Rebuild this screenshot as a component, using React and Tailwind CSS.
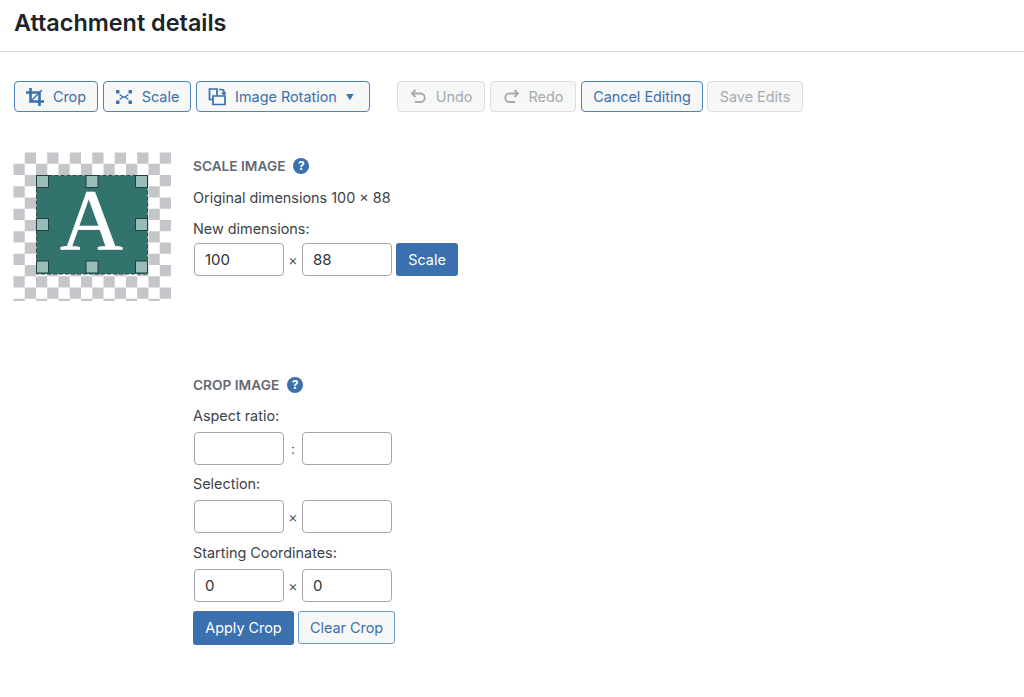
import React from 'react';

const font = { fontFamily: 'Inter, "Noto Sans", sans-serif' };

const CropIcon = () => (
    <svg width="18" height="18" viewBox="0 0 18 18" fill="none" stroke="currentColor" strokeWidth="2.6">
        <path d="M0 4.500h13.500V18" />
        <path d="M4.500 0v13.500H18" />
        <path d="M4.500 13.500L16 2" strokeWidth="1.5" />
    </svg>
);

const ScaleIcon = () => (
    <svg width="18" height="18" viewBox="0 0 18 18" fill="currentColor">
        <rect x="1" y="2" width="3.5" height="3.5" rx="0.8" />
        <rect x="13.5" y="2" width="3.5" height="3.5" rx="0.8" />
        <rect x="1" y="12.5" width="3.5" height="3.5" rx="0.8" />
        <rect x="13.5" y="12.5" width="3.5" height="3.5" rx="0.8" />
        <path d="M5 6l3 2.200h2L13 6l.8.9L11 9l2.800 2.100-.8.9-3-2.200H8L5 12l-.8-.9L7 9 4.200 6.900z" />
    </svg>
);

const RotationIcon = () => (
    <svg width="18" height="20" viewBox="0 0 18 20" fill="none" stroke="currentColor" strokeWidth="1.7">
        <path d="M5 12.500H1.500V2h7.500v7" />
        <path d="M5 9h12v8.500H5z" />
        <path d="M11 2.500h2.500a2.500 2.500 0 012.500 2.500v2" />
        <path d="M13.800 5.500L16 7.800l2-2.300" strokeWidth="1.400" />
    </svg>
);

const UndoIcon = () => (
    <svg width="17" height="16" viewBox="0 0 17 16" fill="none" stroke="currentColor" strokeWidth="1.8">
        <path d="M2 4.500h8.500a4.200 4.200 0 010 8.500H5" />
        <path d="M5.500 1L2 4.500 5.500 8" />
    </svg>
);

const RedoIcon = () => (
    <svg width="17" height="16" viewBox="0 0 17 16" fill="none" stroke="currentColor" strokeWidth="1.8">
        <path d="M15 4.500H6.500a4.200 4.200 0 000 8.500H12" />
        <path d="M11.500 1L15 4.500 11.500 8" />
    </svg>
);

const HelpDot = () => (
    <span className="flex h-4 w-4 items-center justify-center rounded-full bg-[#3a70ad] text-[12px] font-bold leading-none text-white">?</span>
);

const ToolButton = ({ children, width, disabled }) => (
    <button
        className={
            disabled
                ? 'flex h-[31px] items-center justify-center gap-[9px] rounded-[4px] border border-[#dcdddd] bg-[#f6f7f7] text-[14.400px] text-[#a7aaad]'
                : 'flex h-[31px] items-center justify-center gap-[9px] rounded-[4px] border border-[#4f82bb] bg-[#f6f7f7] text-[14.400px] text-[#3a70ad]'
        }
        style={{ width }}
    >
        {children}
    </button>
);

const NumField = ({ value }) => (
    <div className="flex h-[33px] w-[90px] items-center rounded-[4px] border border-[#a4a6aa] bg-white px-[10px] pt-px text-[15px] text-[#2c3338]">
        {value}
    </div>
);

const FieldRow = ({ a, b, sep, children }) => (
    <div className="flex items-center">
        <NumField value={a} />
        <span className="w-[18px] text-center text-[14px] text-[#50575e]">{sep}</span>
        <NumField value={b} />
        {children}
    </div>
);

const checks = [];
for (let row = 0; row < 14; row++) {
    for (let col = 0; col < 14; col++) {
        if ((row + col) % 2 === 1) checks.push([col, row]);
    }
}

const handles = [
    [36.5, 175.5], [86, 175.5], [135.5, 175.5],
    [36.5, 218.5], [135.5, 218.5],
    [36.5, 261], [86, 261], [135.5, 261],
];

const Preview = () => (
    <svg width="158" height="149" viewBox="13 152 158 149" className="block shrink-0">
        {checks.map(([col, row]) => (
            <rect key={`${col}-${row}`} x={13.5 + col * 11.25} y={152.5 + row * 11.25} width="11.25" height="11.25" fill="#c5c6ca" />
        ))}
        <rect x="36.500" y="175.500" width="111" height="98.500" fill="#33736d" stroke="#2c4a47" strokeDasharray="4 2" />
        <text x="91.500" y="249" textAnchor="middle" fontFamily="Liberation Serif, serif" fontSize="87" fill="#fff" stroke="#fff" strokeWidth="0.6">A</text>
        {handles.map(([x, y]) => (
            <rect key={`${x}-${y}`} x={x} y={y} width="12" height="12" fill="#98bdb9" stroke="#22403d" strokeWidth="1" />
        ))}
    </svg>
);

const App = () => {
    return (
        <div className="h-[697px] w-[1024px] overflow-hidden bg-white text-[#3c434a]" style={font}>
            <header className="flex h-[52px] items-center border-b border-[#dcdcde] pl-[14px] pb-[5px]">
                <h1 className="text-[23.400px] font-semibold text-[#1d2327]">Attachment details</h1>
            </header>

            <div className="flex pl-[14px] pt-[29px]">
                <div className="flex gap-[5px]">
                    <ToolButton width={84}><CropIcon /> Crop</ToolButton>
                    <ToolButton width={88}><ScaleIcon /> Scale</ToolButton>
                    <ToolButton width={174}><RotationIcon /> Image Rotation <span className="mr-[4px] text-[8px]">▼</span></ToolButton>
                </div>
                <div className="ml-[27px] flex gap-[5px]">
                    <ToolButton width={88} disabled><UndoIcon /> Undo</ToolButton>
                    <ToolButton width={86} disabled><RedoIcon /> Redo</ToolButton>
                    <ToolButton width={122}>Cancel Editing</ToolButton>
                    <div className="-ml-px">
                        <ToolButton width={96} disabled>Save Edits</ToolButton>
                    </div>
                </div>
            </div>

            <div className="flex gap-[22px] pl-[13px] pt-[40px]">
                <Preview />
                <div className="text-[14.400px]">
                    <section className="h-[219px]">
                        <div className="flex h-[28px] items-center gap-[8px] text-[13.700px] font-semibold text-[#646970]">
                            SCALE IMAGE <HelpDot />
                        </div>
                        <p className="mt-[8px] leading-[20px]">Original dimensions 100 × 88</p>
                        <p className="mt-[11px] leading-[20px]">New dimensions:</p>
                        <div className="mt-[4px] ml-px">
                            <FieldRow a="100" b="88" sep="×">
                                <button className="ml-[4px] h-[33px] w-[62px] rounded-[3px] bg-[#3a70ad] text-[14.400px] text-white">Scale</button>
                            </FieldRow>
                        </div>
                    </section>

                    <section>
                        <div className="flex h-[28px] items-center gap-[8px] text-[13.700px] font-semibold text-[#646970]">
                            CROP IMAGE <HelpDot />
                        </div>
                        <p className="mt-[7px] leading-[20px]">Aspect ratio:</p>
                        <div className="mt-[6px] ml-px"><FieldRow a="" b="" sep=":" /></div>
                        <p className="mt-[9px] leading-[20px]">Selection:</p>
                        <div className="mt-[6px] ml-px"><FieldRow a="" b="" sep="×" /></div>
                        <p className="mt-[10px] leading-[20px]">Starting Coordinates:</p>
                        <div className="mt-[6px] ml-px"><FieldRow a="0" b="0" sep="×" /></div>
                        <div className="mt-[9px] flex gap-[4px]">
                            <button className="h-[34px] w-[101px] rounded-[3px] bg-[#3a70ad] text-[14.400px] text-white">Apply Crop</button>
                            <button className="h-[33px] w-[97px] rounded-[3px] border border-[#6f9bc9] bg-[#f6f7f7] text-[14.400px] text-[#3a70ad]">Clear Crop</button>
                        </div>
                    </section>
                </div>
            </div>
        </div>
    );
};

export default App;
